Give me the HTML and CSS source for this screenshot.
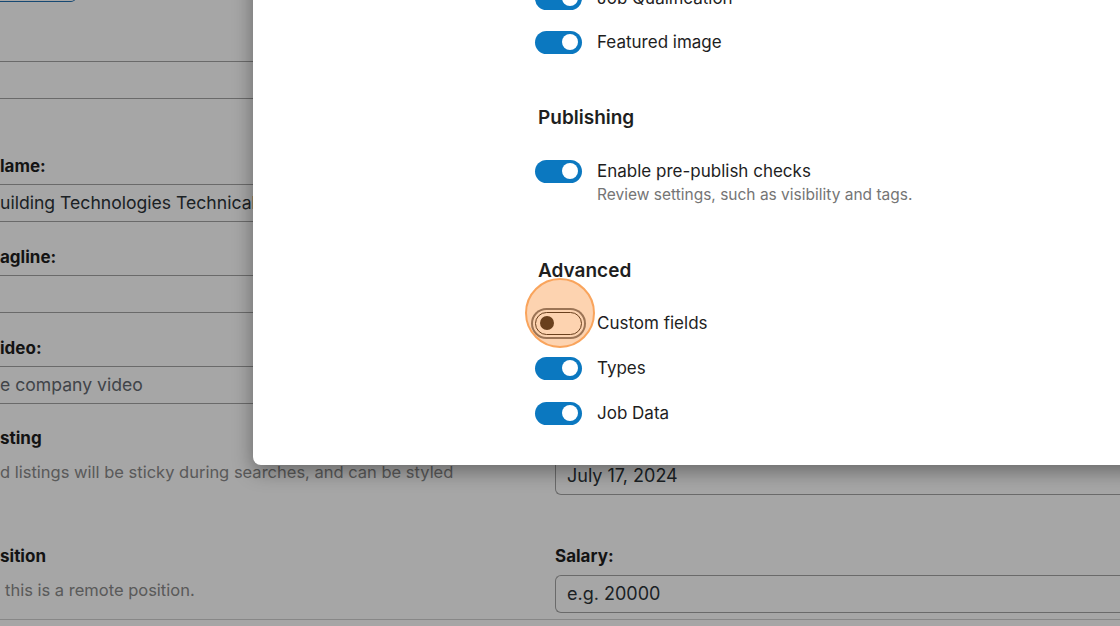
FILE: index.html
```html
<!DOCTYPE html>
<html lang="en">
<head>
    <meta charset="UTF-8">
    <meta name="viewport" content="width=device-width, initial-scale=1.0">
    <title>Preferences</title>
    <link rel="stylesheet" href="styles.css">
</head>
<body>
    <div class="page">
        <div class="columns">
            <div class="col col-left">
                <div class="btn-stub"></div>
                <div class="input input-first"></div>

                <div class="label label-first">lame:</div>
                <div class="input">uilding Technologies Technical College</div>

                <div class="label">agline:</div>
                <div class="input"></div>

                <div class="label">ideo:</div>
                <div class="input placeholder">e company video</div>

                <div class="label label-check">sting</div>
                <div class="desc">d listings will be sticky during searches, and can be styled</div>

                <div class="label label-check2">sition</div>
                <div class="desc desc-indent">this is a remote position.</div>
            </div>
            <div class="col col-right">
                <div class="box box-date">July 17, 2024</div>
                <div class="label label-salary">Salary:</div>
                <div class="box placeholder">e.g. 20000</div>
            </div>
        </div>
        <div class="footer-line"></div>
    </div>

    <div class="backdrop"></div>

    <div class="modal">
        <div class="modal-body">
            <div class="section">
                <div class="row">
                    <span class="toggle on"></span>
                    <span class="row-label">Job Qualification</span>
                </div>
                <div class="row">
                    <span class="toggle on"></span>
                    <span class="row-label">Featured image</span>
                </div>
            </div>

            <div class="section section-publishing">
                <h2 class="section-title">Publishing</h2>
                <div class="row">
                    <span class="toggle on"></span>
                    <div>
                        <div class="row-label">Enable pre-publish checks</div>
                        <div class="row-help">Review settings, such as visibility and tags.</div>
                    </div>
                </div>
            </div>

            <div class="section section-advanced">
                <h2 class="section-title">Advanced</h2>
                <div class="row">
                    <span class="toggle off focused">
                        <span class="click-dot"></span>
                    </span>
                    <span class="row-label">Custom fields</span>
                </div>
                <div class="row">
                    <span class="toggle on"></span>
                    <span class="row-label">Types</span>
                </div>
                <div class="row">
                    <span class="toggle on"></span>
                    <span class="row-label">Job Data</span>
                </div>
            </div>
        </div>
    </div>
</body>
</html>
```

FILE: styles.css
```css
body {
    margin: 0;
    padding: 0;
    width: 1120px;
    height: 626px;
    overflow: hidden;
    background-color: white;
    font-family: Inter, "Noto Sans", sans-serif;
    color: #1e1e1e;
    position: relative;
}

/* page under the dialog */
.page {
    height: 626px;
}

.columns {
    display: grid;
    grid-template-columns: 520px 600px;
    column-gap: 35px;
}

.col-left {
    display: flex;
    flex-direction: column;
}

.btn-stub {
    width: 76px;
    height: 34px;
    margin-top: -32px;
    border: 1px solid #2271b1;
    border-left: none;
    border-radius: 0 5px 5px 0;
    box-sizing: border-box;
}

.input {
    height: 38px;
    border-top: 1.5px solid #a3a3a3;
    border-bottom: 1.5px solid #a3a3a3;
    box-sizing: border-box;
    font-size: 17.6px;
    line-height: 35px;
    color: #2c3338;
    white-space: nowrap;
    overflow: hidden;
}

.input-first {
    margin-top: 59px;
}

.placeholder {
    color: #646970;
}

.label {
    font-size: 17px;
    font-weight: 700;
    line-height: 24px;
    margin-top: 23px;
    margin-bottom: 6px;
    white-space: nowrap;
}

.label-first {
    margin-top: 55px;
}

.label-check {
    margin-top: 22px;
    margin-bottom: 0;
}

.label-check2 {
    margin-top: 61px;
    margin-bottom: 0;
}

.desc {
    font-size: 16.5px;
    line-height: 22px;
    margin-top: 11px;
    color: #8a8a8a;
    white-space: nowrap;
}

.desc-indent {
    padding-left: 5px;
}

.col-right {
    display: flex;
    flex-direction: column;
}

.box {
    height: 38px;
    border: 1.5px solid #a3a3a3;
    border-right: none;
    border-radius: 6px 0 0 6px;
    box-sizing: border-box;
    padding-left: 11px;
    font-size: 18px;
    line-height: 35px;
    color: #2c3338;
}

.box-date {
    margin-top: 457px;
}

.label-salary {
    margin-top: 49px;
    margin-bottom: 7px;
}

.footer-line {
    position: absolute;
    left: 0;
    right: 0;
    top: 619px;
    border-top: 1.5px solid #d0d0d0;
}

.backdrop {
    position: absolute;
    inset: 0;
    background: rgba(0, 0, 0, 0.35);
}

/* preferences dialog */
.modal {
    position: absolute;
    top: -40px;
    left: 253px;
    width: 900px;
    height: 505px;
    background: white;
    border-bottom-left-radius: 8px;
    box-shadow: 0 6px 20px rgba(0, 0, 0, 0.38);
}

.modal-body {
    padding: 26px 0 0 282px;
}

.section {
    display: flex;
    flex-direction: column;
    gap: 20px;
}

.section-publishing {
    margin-top: 52px;
}

.section-advanced {
    margin-top: 54px;
    gap: 21px;
}

.section-title {
    margin: 0;
    font-size: 19px;
    font-weight: 600;
    line-height: 24px;
    color: #1e1e1e;
    padding-left: 3px;
}

.section-publishing .section-title {
    margin-bottom: 9px;
}

.section-advanced .section-title {
    margin-bottom: 7px;
}

.row {
    display: flex;
    align-items: flex-start;
    gap: 15px;
}

.row-label {
    font-size: 17px;
    line-height: 24px;
    color: #1e1e1e;
}

.row-help {
    margin-top: 2px;
    font-size: 15.5px;
    line-height: 20px;
    color: #757575;
}

.toggle {
    position: relative;
    flex: none;
    width: 47px;
    height: 23px;
    margin-top: 0.5px;
    border-radius: 12px;
    box-sizing: border-box;
}

.toggle::after {
    content: "";
    position: absolute;
    border-radius: 50%;
}

.toggle.on {
    background: #0b78c0;
}

.toggle.on::after {
    width: 16px;
    height: 16px;
    top: 3.5px;
    right: 4px;
    background: white;
}

.toggle.off {
    background: white;
    border: 1.5px solid #1e1e1e;
}

.toggle.off::after {
    width: 14px;
    height: 14px;
    top: 3px;
    left: 4px;
    background: #1e1e1e;
}

.toggle.focused {
    box-shadow: 0 0 0 2px white, 0 0 0 4px #6a6e74;
}

.click-dot {
    position: absolute;
    z-index: 2;
    left: -11px;
    top: -35px;
    width: 70px;
    height: 70px;
    border-radius: 50%;
    box-sizing: border-box;
    background: rgba(250, 129, 30, 0.35);
    border: 2px solid #f9a45c;
}
```
